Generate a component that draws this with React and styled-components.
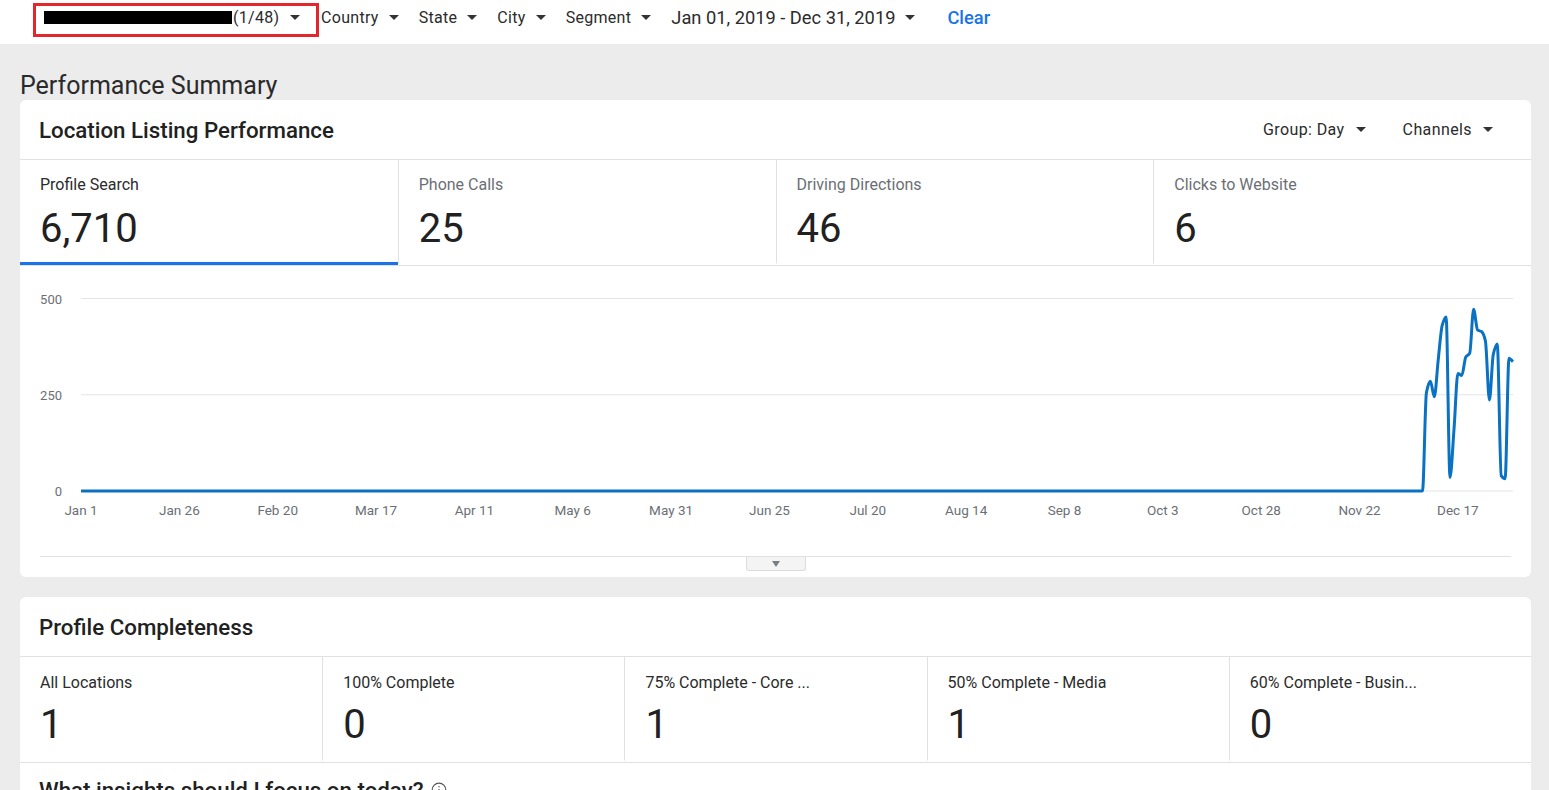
import React from "react";
import styled, { createGlobalStyle } from "styled-components";

const GlobalStyle = createGlobalStyle`
  html, body {
    margin: 0;
    padding: 0;
    background: #ececec;
    font-family: Roboto, "Liberation Sans", Arial, sans-serif;
    color: #212121;
  }
  * { box-sizing: border-box; }
`;

const Page = styled.div`
  min-height: 100vh;
  background: #ececec;
`;

const TopBar = styled.div`
  height: 44px;
  background: #fff;
  display: flex;
  align-items: flex-start;
  padding: 3px 0 0 33px;
`;

const Highlight = styled.div`
  display: flex;
  align-items: center;
  width: 286px;
  height: 34px;
  border: 3px solid #e3262b;
  padding: 0 0 6px 8px;
  margin-right: 2px;
`;

const Redacted = styled.span`
  display: inline-block;
  width: 188px;
  height: 13px;
  background: #000;
  margin-right: 1px;
`;

const FilterItem = styled.div`
  display: flex;
  align-items: center;
  height: ${(p) => (p.$boxed ? "auto" : "28px")};
  font-size: ${(p) => (p.$big ? "18.3px" : "16px")};
  letter-spacing: ${(p) => (p.$big ? "0" : "0.3px")};
  color: #2b2b2b;
  margin-right: ${(p) => (p.$boxed ? "0" : "20px")};
  white-space: nowrap;
`;

const Caret = styled.span`
  display: inline-block;
  width: 0;
  height: 0;
  border-left: 5px solid transparent;
  border-right: 5px solid transparent;
  border-top: 5px solid #333;
  margin-left: ${(p) => p.$gap || 10}px;
`;

const ClearLink = styled.a`
  font-size: 18.3px;
  font-weight: 500;
  color: #1a73e8;
  line-height: 30px;
  margin-left: 12px;
  text-decoration: none;
  cursor: pointer;
`;

const Content = styled.div`
  padding: 0 18px 0 20px;
`;

const PageTitle = styled.h1`
  margin: 27px 0 0;
  font-size: 25px;
  line-height: 29px;
  font-weight: 400;
  color: #2a2a2a;
`;

const Card = styled.div`
  background: #fff;
  border-radius: 6px;
  margin-bottom: 20px;
  overflow: hidden;
`;

const CardHeader = styled.div`
  height: 60px;
  display: flex;
  align-items: center;
  justify-content: space-between;
  padding: 0 38px 0 19px;
  border-bottom: 1px solid #dfe1e5;
`;

const CardTitle = styled.h2`
  margin: 0;
  font-size: 22.3px;
  font-weight: 500;
  color: #212121;
`;

const HeaderControls = styled.div`
  display: flex;
  align-items: center;
  gap: 37px;
`;

const Control = styled.div`
  display: flex;
  align-items: center;
  font-size: 16px;
  letter-spacing: 0.4px;
  color: #2b2b2b;
`;

const StatRow = styled.div`
  display: grid;
  grid-template-columns: repeat(${(p) => p.$cols}, 1fr);
  border-bottom: 1px solid #dfe1e5;
`;

const Stat = styled.div`
  padding: ${(p) => (p.$compact ? "16px 20px 12px" : "15px 20px 11px")};
  border-left: 1px solid #dfe1e5;
  border-bottom: 3px solid ${(p) => (p.$active ? "#1a73e8" : "transparent")};
  &:first-child {
    border-left: none;
  }
`;

const StatLabel = styled.div`
  font-size: 16px;
  line-height: 19px;
  color: ${(p) => (p.$active ? "#2b2b2b" : "#6b6f75")};
  white-space: nowrap;
`;

const StatValue = styled.div`
  font-size: 40px;
  line-height: 44px;
  margin-top: ${(p) => (p.$compact ? "11px" : "13px")};
  color: #212121;
`;

const ChartWrap = styled.div`
  height: 290px;
  & svg {
    display: block;
  }
`;

const Divider = styled.div`
  margin: 0 20px;
  border-top: 1px solid #dfe1e5;
`;

const ToggleRow = styled.div`
  display: flex;
  justify-content: center;
  padding-bottom: 6px;
`;

const Toggle = styled.button`
  width: 60px;
  height: 14px;
  border: 1px solid #dcdcdc;
  border-top: none;
  border-radius: 0 0 3px 3px;
  background: #f4f4f4;
  padding: 0;
  display: flex;
  align-items: center;
  justify-content: center;
  cursor: pointer;
`;

const ToggleArrow = styled.span`
  width: 0;
  height: 0;
  border-left: 4px solid transparent;
  border-right: 4px solid transparent;
  border-top: 6px solid #7a7f87;
`;

const InsightTitle = styled.h2`
  margin: 0;
  padding: 13px 19px 0;
  display: flex;
  align-items: center;
  gap: 8px;
  font-size: 22.3px;
  line-height: 28px;
  font-weight: 500;
  color: #212121;
`;

const X0 = 61;
const PX_PER_DAY = 3.934;
const Y0 = 225;
const PX_PER_UNIT = 0.385;

const tail = {
  341: 0, 342: 255, 343: 285, 344: 245, 345: 340, 346: 430, 347: 452,
  348: 35, 349: 160, 350: 305, 351: 300, 352: 348, 353: 358, 354: 472,
  355: 418, 356: 414, 357: 390, 358: 236, 359: 355, 360: 382, 361: 40,
  362: 32, 363: 345, 364: 336,
};

const values = Array.from({ length: 365 }, (_, d) => tail[d] || 0);

// monotone cubic so the curve never dips under the baseline
function buildPath(vals) {
  const xs = vals.map((_, i) => X0 + i * PX_PER_DAY);
  const ys = vals.map((v) => Y0 - v * PX_PER_UNIT);
  const n = xs.length;
  const h = PX_PER_DAY;
  const s = [];
  for (let i = 0; i < n - 1; i++) s.push((ys[i + 1] - ys[i]) / h);
  const m = new Array(n);
  m[0] = s[0];
  m[n - 1] = s[n - 2];
  for (let i = 1; i < n - 1; i++) {
    if (s[i - 1] * s[i] <= 0) m[i] = 0;
    else m[i] = (2 * s[i - 1] * s[i]) / (s[i - 1] + s[i]);
  }
  let d = `M${xs[0].toFixed(1)},${ys[0].toFixed(1)}`;
  for (let i = 0; i < n - 1; i++) {
    const c1x = xs[i] + h / 3;
    const c1y = ys[i] + (m[i] * h) / 3;
    const c2x = xs[i + 1] - h / 3;
    const c2y = ys[i + 1] - (m[i + 1] * h) / 3;
    d += ` C${c1x.toFixed(1)},${c1y.toFixed(1)} ${c2x.toFixed(1)},${c2y.toFixed(1)} ${xs[i + 1].toFixed(1)},${ys[i + 1].toFixed(1)}`;
  }
  return d;
}

const xLabels = [
  "Jan 1", "Jan 26", "Feb 20", "Mar 17", "Apr 11", "May 6", "May 31", "Jun 25",
  "Jul 20", "Aug 14", "Sep 8", "Oct 3", "Oct 28", "Nov 22", "Dec 17",
];

const yTicks = [500, 250, 0];

const Chart = () => (
  <ChartWrap>
    <svg width="1511" height="290" viewBox="0 0 1511 290">
      {yTicks.map((t) => {
        const y = Y0 - t * PX_PER_UNIT;
        return (
          <g key={t}>
            <line x1={X0} x2={1493} y1={y} y2={y} stroke="#e3e4e6" strokeWidth="1" />
            <text
              x={42}
              y={y + 5}
              textAnchor="end"
              fontSize="13"
              fill="#6b6f75"
              fontFamily="Roboto, sans-serif"
            >
              {t}
            </text>
          </g>
        );
      })}
      {xLabels.map((l, i) => (
        <text
          key={l}
          x={X0 + i * 25 * PX_PER_DAY}
          y={249}
          textAnchor="middle"
          fontSize="13.5"
          fill="#6b6f75"
          fontFamily="Roboto, sans-serif"
        >
          {l}
        </text>
      ))}
      <path d={buildPath(values)} fill="none" stroke="#0a72c2" strokeWidth="3" strokeLinejoin="round" />
    </svg>
  </ChartWrap>
);

const InfoIcon = () => (
  <svg width="16" height="16" viewBox="0 0 16 16" fill="none" stroke="#555" strokeWidth="1.2">
    <circle cx="8" cy="8" r="6.8" />
    <line x1="8" y1="7" x2="8" y2="11.5" />
    <circle cx="8" cy="4.8" r="0.7" fill="#555" stroke="none" />
  </svg>
);

const performanceStats = [
  { label: "Profile Search", value: "6,710", active: true },
  { label: "Phone Calls", value: "25" },
  { label: "Driving Directions", value: "46" },
  { label: "Clicks to Website", value: "6" },
];

const completenessStats = [
  { label: "All Locations", value: "1" },
  { label: "100% Complete", value: "0" },
  { label: "75% Complete - Core ...", value: "1" },
  { label: "50% Complete - Media", value: "1" },
  { label: "60% Complete - Busin...", value: "0" },
];

const filters = ["Country", "State", "City", "Segment"];

const App = () => {
  return (
    <Page>
      <GlobalStyle />
      <TopBar>
        <Highlight>
          <Redacted />
          <FilterItem $boxed>
            (1/48)
            <Caret $gap={11} />
          </FilterItem>
        </Highlight>
        {filters.map((f) => (
          <FilterItem key={f}>
            {f}
            <Caret />
          </FilterItem>
        ))}
        <FilterItem $big>
          Jan 01, 2019 - Dec 31, 2019
          <Caret $gap={10} />
        </FilterItem>
        <ClearLink>Clear</ClearLink>
      </TopBar>

      <Content>
        <PageTitle>Performance Summary</PageTitle>

        <Card>
          <CardHeader>
            <CardTitle>Location Listing Performance</CardTitle>
            <HeaderControls>
              <Control>
                Group: Day
                <Caret $gap={11} />
              </Control>
              <Control>
                Channels
                <Caret $gap={11} />
              </Control>
            </HeaderControls>
          </CardHeader>
          <StatRow $cols={4}>
            {performanceStats.map((s) => (
              <Stat key={s.label} $active={s.active}>
                <StatLabel $active={s.active}>{s.label}</StatLabel>
                <StatValue>{s.value}</StatValue>
              </Stat>
            ))}
          </StatRow>
          <Chart />
          <Divider />
          <ToggleRow>
            <Toggle>
              <ToggleArrow />
            </Toggle>
          </ToggleRow>
        </Card>

        <Card>
          <CardHeader>
            <CardTitle>Profile Completeness</CardTitle>
          </CardHeader>
          <StatRow $cols={5}>
            {completenessStats.map((s) => (
              <Stat key={s.label} $compact>
                <StatLabel $active>{s.label}</StatLabel>
                <StatValue $compact>{s.value}</StatValue>
              </Stat>
            ))}
          </StatRow>
          <InsightTitle>
            What insights should I focus on today?
            <InfoIcon />
          </InsightTitle>
        </Card>
      </Content>
    </Page>
  );
};

export default App;
